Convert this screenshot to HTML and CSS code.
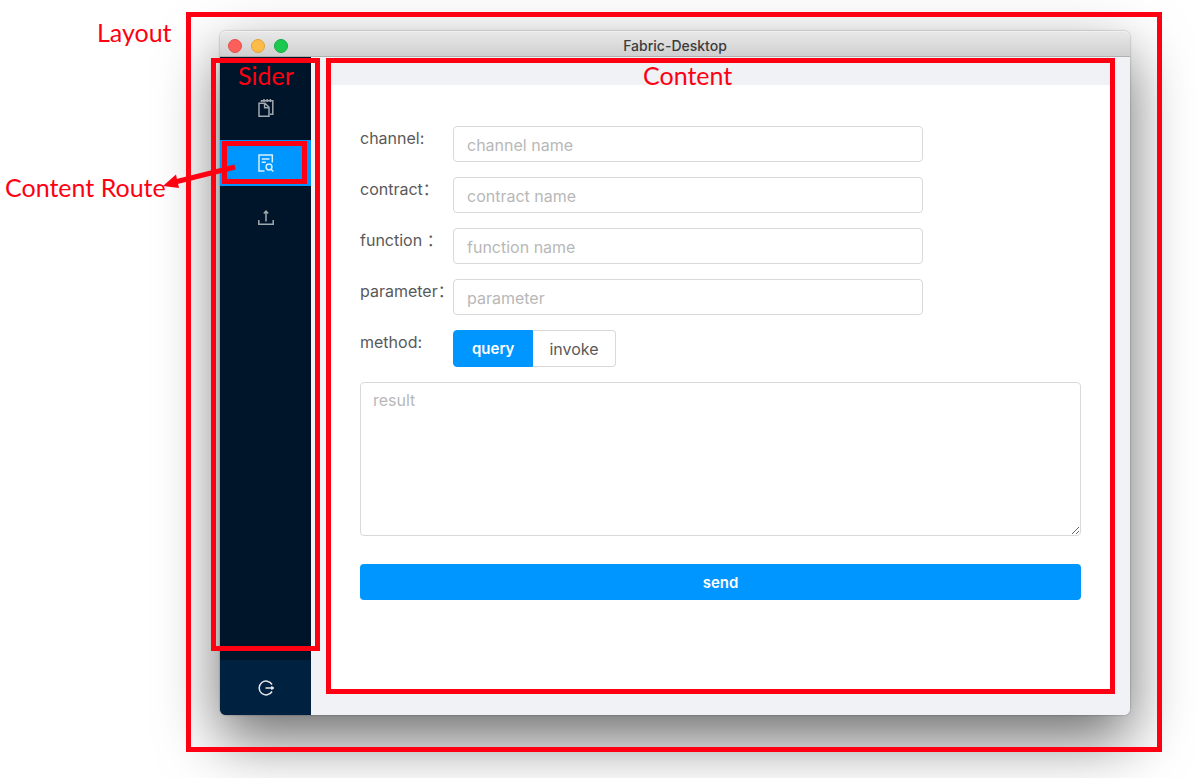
FILE: index.html
```html
<!DOCTYPE html>
<html lang="en">
<head>
<meta charset="utf-8">
<title>Fabric-Desktop</title>
<link rel="stylesheet" href="styles.css">
</head>
<body>
<div class="stage">
  <div class="window">
    <header class="titlebar">
      <div class="lights">
        <button type="button" class="light light-close" aria-label="Close"></button>
        <button type="button" class="light light-min" aria-label="Minimize"></button>
        <button type="button" class="light light-zoom" aria-label="Zoom"></button>
      </div>
      <h1 class="title">Fabric-Desktop</h1>
    </header>
    <div class="app">
      <aside class="sider">
        <nav class="menu">
          <a class="item" href="#data" aria-label="Data">
            <svg class="icon" viewBox="0 0 16 18"><path d="M3.500 3V1.700h11.300v13.500H12M6 0v3M9.200 0v3M12.300 0v3M1 4.300h6l4 4v8.900H1zM6.600 4.500v4.200h4.200"/></svg>
          </a>
          <a class="item item-active" href="#contract" aria-label="Contract">
            <svg class="icon" viewBox="0 0 16 18"><path d="M6.500 17H1V1h13.300v7.500M3.800 5h7.700M3.800 8.300h4"/><circle cx="11" cy="13" r="2.900"/><path d="M13.100 15.200l2.300 2.300"/></svg>
            <span class="frame frame-route"></span>
          </a>
          <a class="item" href="#install" aria-label="Install">
            <svg class="icon" viewBox="0 0 16 18"><path d="M.8 11v4.300h14.400V11M8 12.500V2.500M5.800 4.400L8 2l2.200 2.400"/></svg>
          </a>
        </nav>
        <button type="button" class="logout" aria-label="Log out">
          <svg class="icon icon-bright" viewBox="0 0 16 18"><path d="M14 5.500A6.900 6.900 0 1 0 14 12.500M7.500 9h7.500M13.300 7.500L15.300 9l-2 1.500"/></svg>
        </button>
        <span class="frame frame-sider"></span>
        <span class="note note-sider">Sider</span>
        <span class="note note-route">Content Route</span>
        <svg class="arrow" viewBox="0 0 80 40"><path class="arrow-line" d="M75 16L15 31"/><path class="arrow-head" d="M3 35L16 23.500L19 37z"/></svg>
      </aside>
      <main class="main">
        <form class="panel">
          <div class="row">
            <label for="channel">channel:</label>
            <input id="channel" class="field" type="text" placeholder="channel name">
          </div>
          <div class="row">
            <label for="contract">contract：</label>
            <input id="contract" class="field" type="text" placeholder="contract name">
          </div>
          <div class="row">
            <label for="function">function ：</label>
            <input id="function" class="field" type="text" placeholder="function name">
          </div>
          <div class="row">
            <label for="parameter">parameter：</label>
            <input id="parameter" class="field" type="text" placeholder="parameter">
          </div>
          <div class="row" role="radiogroup" aria-labelledby="method">
            <span id="method">method:</span>
            <div class="switch">
              <label class="option"><input type="radio" name="method" checked><span>query</span></label>
              <label class="option"><input type="radio" name="method"><span>invoke</span></label>
            </div>
          </div>
          <textarea class="result" placeholder="result" aria-label="result"></textarea>
          <button type="button" class="send">send</button>
        </form>
        <span class="frame frame-content"></span>
        <span class="note note-content">Content</span>
      </main>
    </div>
    <span class="frame frame-layout"></span>
    <span class="note note-layout">Layout</span>
  </div>
</div>
</body>
</html>
```
FILE: styles.css
```css
* { box-sizing: border-box; }

body {
  margin: 0;
  background: #fff;
  color: #595959;
  font: 16px/24px Inter, "Noto Sans CJK SC", sans-serif;
}

.stage {
  display: flex;
  min-height: 100vh;
  padding: 31px 67px 63px 220px;
  overflow: hidden;
}

.window {
  position: relative;
  display: flex;
  flex: 1;
  flex-direction: column;
  min-width: 0;
  border-radius: 6px;
  box-shadow: 0 0 2px rgba(0, 0, 0, .4), 0 24px 60px rgba(0, 0, 0, .58);
}

.titlebar {
  display: grid;
  grid-template-columns: 1fr auto 1fr;
  align-items: center;
  height: 26px;
  padding-top: 2px;
  border-top: 1px solid #f0f0f0;
  border-bottom: 1px solid #b0b0b0;
  border-radius: 6px 6px 0 0;
  background: linear-gradient(#e8e8e8, #d0d0d0);
}

.lights {
  display: flex;
  gap: 9px;
  padding-left: 8px;
}

.light {
  width: 14px;
  height: 14px;
  padding: 0;
  border: 1px solid;
  border-radius: 50%;
}

.light-close { border-color: #e2504c; background: #ff5f5b; }
.light-min { border-color: #e3a13a; background: #fdbc48; }
.light-zoom { border-color: #12ac42; background: #1bc850; }

.title {
  margin: 0;
  color: #3c3c3c;
  font-size: 14px;
  font-weight: 500;
}

.app {
  display: flex;
  flex: 1;
}

.sider {
  position: relative;
  z-index: 1;
  display: flex;
  flex: none;
  flex-direction: column;
  width: 91px;
  border-bottom-left-radius: 6px;
  background: #001529;
}

.menu {
  display: flex;
  flex: 1;
  flex-direction: column;
  gap: 9px;
  padding-top: 28px;
}

.item {
  position: relative;
  display: flex;
  align-items: center;
  justify-content: center;
  height: 46px;
}

.item-active { background: #0096ff; }

.icon {
  width: 16px;
  height: 18px;
  fill: none;
  stroke: #a0a8b0;
  stroke-width: 1.5;
}

.item-active .icon { stroke: #d9f0ff; }
.icon-bright { stroke: #e6eaee; }

.logout {
  display: flex;
  align-items: center;
  justify-content: center;
  height: 55px;
  padding: 0;
  border: 0;
  border-bottom-left-radius: 6px;
  background: #002140;
}

.main {
  position: relative;
  display: flex;
  flex: 1;
  min-width: 0;
  padding: 28px 15px 25px;
  border-bottom-right-radius: 6px;
  background: #f0f2f6;
}

.panel {
  display: flex;
  flex: 1;
  flex-direction: column;
  gap: 15px;
  min-width: 0;
  padding: 41px 34px;
  background: #fff;
}

.row {
  display: grid;
  grid-template-columns: 93px minmax(0, 470px);
  white-space: nowrap;
}

.field,
.result {
  border: 1px solid #d9d9d9;
  border-radius: 4px;
  background: #fff;
  color: #595959;
  font: inherit;
}

.field {
  width: 100%;
  height: 36px;
  padding: 2px 13px 0;
}

.field::placeholder,
.result::placeholder { color: #b8b8b8; }

.switch { display: flex; }

.option {
  position: relative;
  height: 37px;
  padding: 6px 16px;
  border: 1px solid #d9d9d9;
  border-left: 0;
  border-radius: 0 4px 4px 0;
}

.option:first-child {
  padding: 6px 18px;
  border: 1px solid #0096ff;
  border-radius: 4px 0 0 4px;
  background: #0096ff;
  color: #fff;
  font-size: 15px;
  font-weight: 600;
}

.option input {
  position: absolute;
  margin: 0;
  opacity: 0;
}

.result {
  display: block;
  width: 100%;
  height: 154px;
  padding: 5px 12px;
  resize: vertical;
}

.send {
  height: 36px;
  margin-top: 13px;
  padding-top: 2px;
  border: 0;
  border-radius: 4px;
  background: #0096ff;
  color: #fff;
  font: inherit;
  font-size: 15px;
  font-weight: 600;
}

/* Annotations drawn over the window */
.frame {
  position: absolute;
  border: 5px solid #ff0013;
  pointer-events: none;
}

.frame-layout { inset: -19px -32px -37px -34px; }
.frame-sider { inset: 1px -9px 64px; }
.frame-content { inset: 1px 15px 21px; }
.frame-route { inset: 1px 4px 2px 2px; }

.note {
  position: absolute;
  color: #ff0013;
  font: 25px/30px Lato, sans-serif;
  white-space: nowrap;
}

.note-layout { top: -14px; left: -123px; }
.note-sider { top: 3px; left: 18px; }
.note-content { top: 3px; left: 332px; }
.note-route { top: 115px; left: -215px; }

.arrow {
  position: absolute;
  top: 94px;
  left: -60px;
  width: 80px;
  height: 40px;
}

.arrow-line {
  fill: none;
  stroke: #ff0013;
  stroke-width: 5;
}

.arrow-head { fill: #ff0013; }
```
